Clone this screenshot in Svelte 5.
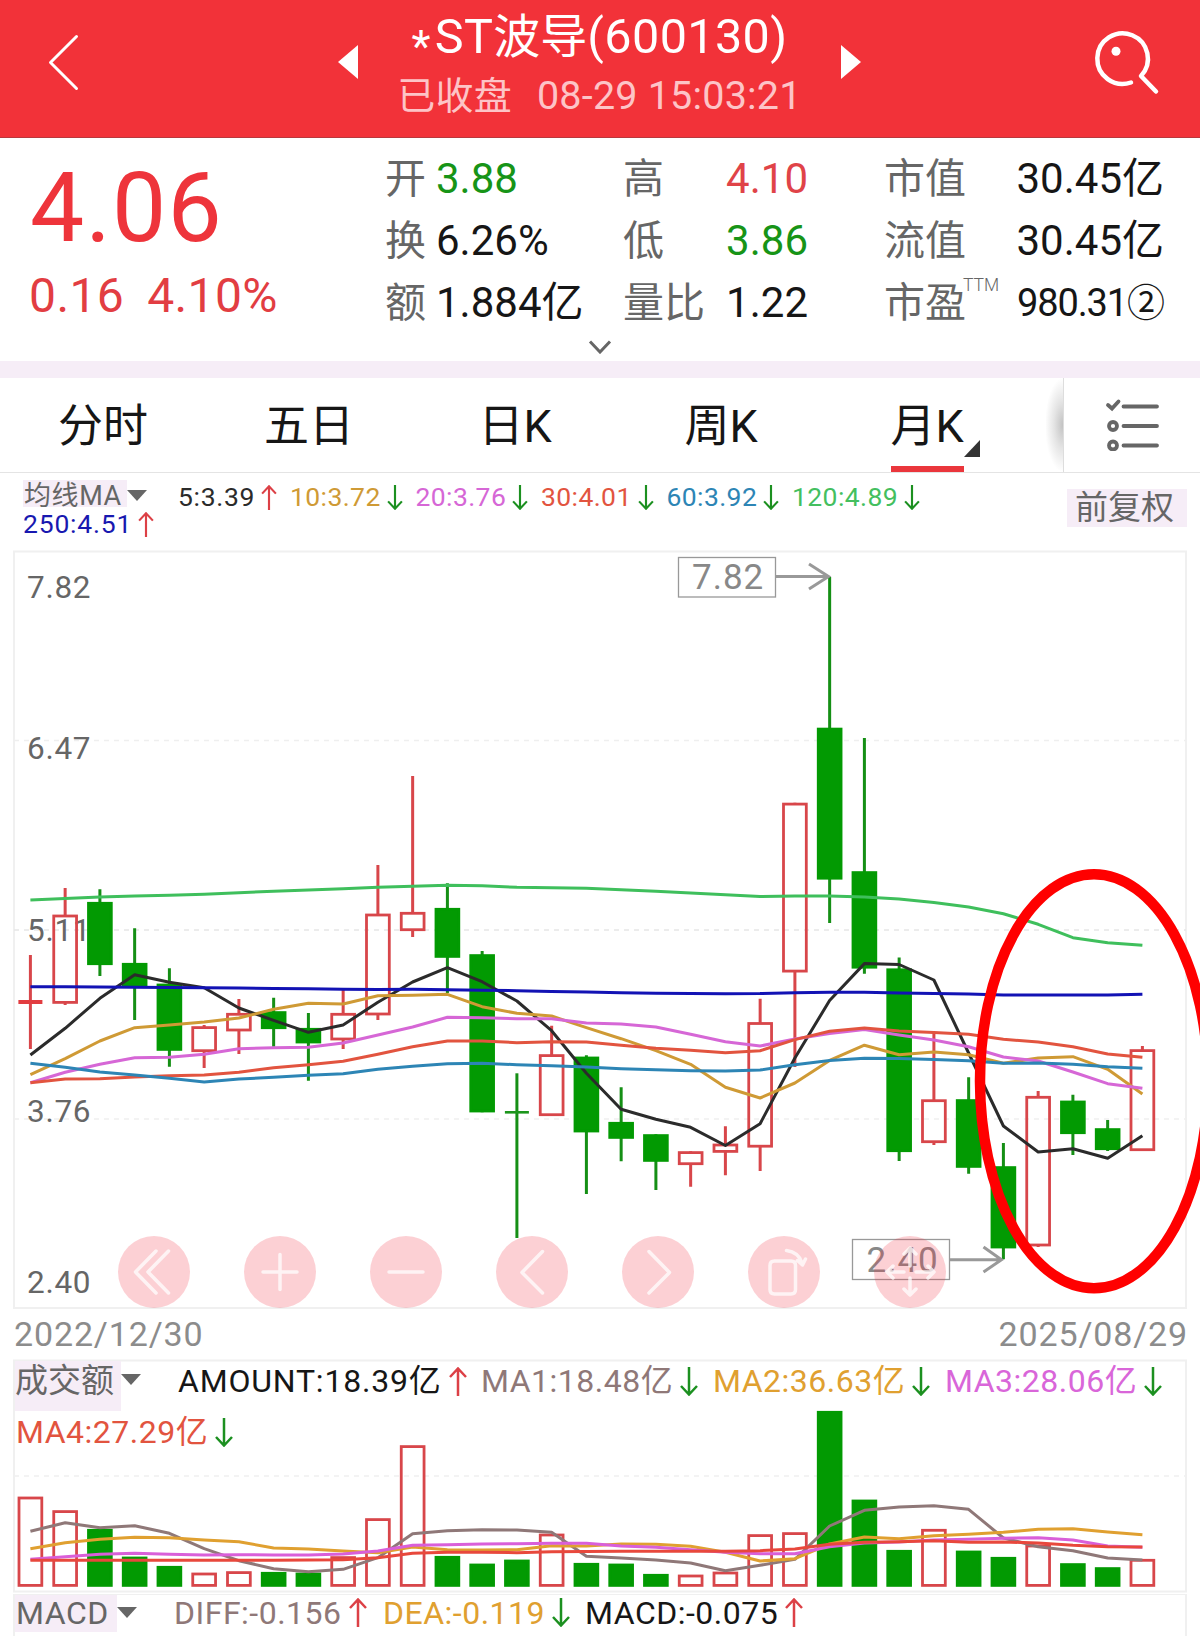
<script>
	const tabs = ['分时', '五日', '日K', '周K', '月K'];
	let activeTab = '月K';

	const quote = [
		{ label: '开', value: '3.88', tone: 'down' },
		{ label: '高', value: '4.10', tone: 'up' },
		{ label: '市值', value: '30.45亿' },
		{ label: '换', value: '6.26%' },
		{ label: '低', value: '3.86', tone: 'down' },
		{ label: '流值', value: '30.45亿' },
		{ label: '额', value: '1.884亿' },
		{ label: '量比', value: '1.22' },
		{ label: '市盈', sup: 'TTM', value: '980.31②', small: true }
	];

	const averages = [
		{ text: '5:3.39', color: '#2b2b2b', up: true },
		{ text: '10:3.72', color: '#cf9a35' },
		{ text: '20:3.76', color: '#d667d6' },
		{ text: '30:4.01', color: '#e2543f' },
		{ text: '60:3.92', color: '#2d85b5' },
		{ text: '120:4.89', color: '#44bf5f' }
	];
	const amounts = [
		{ text: 'AMOUNT:18.39亿', color: '#161616', up: true },
		{ text: 'MA1:18.48亿', color: '#8f7878' },
		{ text: 'MA2:36.63亿', color: '#e0a030' },
		{ text: 'MA3:28.06亿', color: '#d966d9' }
	];
	const macd = [
		{ text: 'DIFF:-0.156', color: '#8f7878', up: true },
		{ text: 'DEA:-0.119', color: '#e0a030' },
		{ text: 'MACD:-0.075', color: '#161616', up: true }
	];

	// [rising, high, body top, body bottom, low]
	const candles = [
		[1, 955, 1000, 1004, 1049],
		[1, 888, 914.7, 1003.7, 1005],
		[0, 889.3, 902, 965, 976],
		[0, 928.3, 963, 986, 1020],
		[0, 968.3, 983.7, 1050.7, 1066.7],
		[1, 1025, 1026.3, 1052, 1068],
		[1, 999, 1013, 1031.3, 1054],
		[0, 997.7, 1011.3, 1029, 1046.7],
		[0, 1013, 1028, 1043.3, 1080.7],
		[1, 990, 1013, 1040.3, 1049],
		[1, 865, 913.7, 1015.3, 1020],
		[1, 776, 912, 931, 937],
		[0, 883.3, 908, 957.7, 993],
		[0, 951, 954.3, 1112.3, 1112.3],
		[0, 1073.3, 1111, 1113.6, 1238],
		[1, 1025.7, 1054.3, 1116, 1116],
		[0, 1055.3, 1056.7, 1132.3, 1194],
		[0, 1087.3, 1122, 1138.7, 1161.3],
		[0, 1134.3, 1134.3, 1161.7, 1190],
		[1, 1151.3, 1151.3, 1165, 1186.7],
		[1, 1126.3, 1143.7, 1152.7, 1175.3],
		[1, 998.8, 1022.2, 1147.5, 1171],
		[1, 802.8, 802.8, 972.4, 1067],
		[0, 577, 727.8, 879.5, 923],
		[0, 738, 871.3, 968.5, 973.7],
		[0, 957.6, 968.5, 1152, 1161],
		[1, 1032, 1099.4, 1143, 1145],
		[0, 1077.3, 1099.3, 1167.7, 1173.7],
		[0, 1143, 1166.3, 1248.3, 1259.3],
		[1, 1091, 1096, 1246.3, 1247],
		[0, 1094.7, 1100.7, 1134, 1155],
		[0, 1120, 1128.3, 1150, 1151],
		[1, 1046, 1049.3, 1151, 1151]
	];
	const priceLines = [
		{ color: '#2b2b2b', y: [1055, 1028.3, 998.3, 974.7, 982.3, 987.7, 1008, 1020.3, 1032.3, 1025, 1002.3, 982, 967.7, 981.7, 1001, 1030.7, 1073.3, 1109.3, 1119.3, 1127.3, 1145.5, 1123.7, 1058, 1000.5, 963.6, 964.5, 980, 1053, 1126, 1152, 1148.7, 1158.3, 1135.7] },
		{ color: '#cf9a35', y: [1074.7, 1058.7, 1041, 1027.7, 1025, 1022, 1018, 1009.3, 1003.3, 1004, 995.7, 995.3, 994.3, 1006.7, 1013.3, 1016, 1027.7, 1038.7, 1050.7, 1064.3, 1087.3, 1098, 1083, 1060.4, 1045.2, 1054.7, 1052, 1054.7, 1063.3, 1058, 1056.7, 1069.3, 1094] },
		{ color: '#d667d6', y: [1082.7, 1072.3, 1064.3, 1057.7, 1057.3, 1054.3, 1048.7, 1047.7, 1047.3, 1043, 1035, 1027, 1017.3, 1017.7, 1018.7, 1018.7, 1023, 1024, 1027, 1034.3, 1041.7, 1046, 1039, 1033.5, 1029.6, 1035, 1040, 1046.7, 1057, 1061, 1072, 1083.7, 1088.3] },
		{ color: '#e2543f', y: [1082.7, 1079, 1078.7, 1077, 1075.7, 1075, 1072.3, 1067.7, 1064.7, 1061.3, 1054.3, 1046.7, 1041, 1041, 1042.7, 1041.7, 1042, 1045.3, 1048.3, 1050.3, 1052.7, 1050.8, 1039.6, 1031.3, 1027.9, 1031, 1032.6, 1034.3, 1039.3, 1042, 1046.7, 1054, 1057.3] },
		{ color: '#2d85b5', y: [1063.3, 1067.3, 1072, 1075, 1078.3, 1082, 1079, 1077.3, 1075.3, 1073.7, 1069.3, 1066.3, 1063.7, 1063.3, 1064.7, 1065.7, 1067, 1068.7, 1069.7, 1070.7, 1071, 1070, 1064.7, 1060.4, 1058.2, 1058.6, 1059.5, 1060.7, 1063.3, 1063, 1064.3, 1066.7, 1068.3] },
		{ color: '#3fbf5c', y: [900, 898.5, 897, 896, 895.3, 894.3, 892.7, 891.3, 890, 888.7, 887.3, 886.3, 885.3, 885.7, 887.3, 887.7, 888.3, 889.7, 891.3, 893, 894.7, 896.5, 896, 896, 897, 899, 902.5, 907, 913.7, 924.3, 937.7, 942.7, 945.3] },
		{ color: '#1212b4', y: [986.7, 986.7, 987, 987.2, 987.4, 987.7, 988, 988.4, 988.8, 989.2, 989.5, 989.3, 989.7, 990.2, 990.7, 991.4, 992, 992.7, 993.3, 993.5, 993.7, 993.6, 992.7, 992.3, 992.3, 993, 993.6, 994, 995, 995, 995, 995, 994.3] }
	];

	// [rising, bar top]
	const volumes = [
		[1, 1496.7], [1, 1510.3], [0, 1529], [0, 1556.7], [0, 1566], [1, 1572.7], [1, 1571.3], [0, 1572],
		[0, 1572.7], [1, 1556.3], [1, 1518.3], [1, 1445.3], [0, 1556], [0, 1563.7], [0, 1559.7], [1, 1533.7],
		[0, 1563], [0, 1563.7], [0, 1574], [1, 1574.7], [1, 1571.7], [1, 1534.3], [1, 1532.3], [0, 1411],
		[0, 1499.7], [0, 1550], [1, 1529], [0, 1550.7], [0, 1557], [1, 1544.7], [0, 1563.3], [0, 1567.3], [1, 1559]
	];
	const volumeLines = [
		{ color: '#8f7878', y: [1531.3, 1522.7, 1527.7, 1525.7, 1533.3, 1548.7, 1560.7, 1568.7, 1571.7, 1569.3, 1557.7, 1533.7, 1530.7, 1529.7, 1530, 1532.3, 1556.3, 1558, 1560, 1563, 1570.7, 1565.3, 1559.3, 1526, 1510.3, 1507, 1505.7, 1509.3, 1538, 1546.7, 1550.7, 1558, 1560] },
		{ color: '#e0a030', y: [1548.7, 1542.7, 1539.3, 1537.3, 1537.7, 1540, 1541.7, 1548, 1549, 1551, 1552.7, 1547, 1549.7, 1550, 1549.7, 1545.7, 1546, 1544, 1544.3, 1546.3, 1552.3, 1561, 1558.7, 1544, 1537, 1538.7, 1535.7, 1534.3, 1532.3, 1529.3, 1528.7, 1532, 1534.7] },
		{ color: '#d95fd9', y: [1559.3, 1556.7, 1554.3, 1553.3, 1554.3, 1555, 1554.7, 1555, 1555, 1554, 1551, 1545.3, 1544.7, 1544, 1543.7, 1543.3, 1543.3, 1546, 1547.3, 1549.7, 1552.3, 1553.7, 1553.7, 1546.7, 1543, 1542, 1540, 1539.3, 1538.3, 1537.7, 1540, 1546, 1547.3] },
		{ color: '#e8483c', y: [1560.3, 1560.3, 1560.3, 1560.3, 1560.3, 1560.3, 1560.3, 1560.3, 1560, 1559.7, 1557.7, 1553.3, 1552.3, 1552.3, 1552.7, 1551.7, 1551.5, 1551.3, 1551.3, 1551.3, 1551.3, 1550.7, 1549, 1544.3, 1542.3, 1541.7, 1540.7, 1542.3, 1542, 1543, 1545.3, 1546.7, 1547] }
	];

	const volumeBase = 1586.7;
	const axis = [
		['7.82', 598],
		['6.47', 758.5],
		['5.11', 940.7],
		['3.76', 1121.5],
		['2.40', 1292.5]
	];

	const x = (i) => 30.4 + i * 34.75;
	const points = (ys) => ys.map((y, i) => `${x(i).toFixed(1)},${y}`).join(' ');

	const tools = [
		{ name: 'first', d: 'M2-21-18.5 0 2 21M14.5-21-6 0 14.5 21' },
		{ name: 'zoom in', d: 'M-17 0H17M0-17.5V17.5' },
		{ name: 'zoom out', d: 'M-17 0H17' },
		{ name: 'previous', d: 'M10.5-20.5-10 .5 10.5 21' },
		{ name: 'next', d: 'M-9-20.5 11.5.5-9 21' },
		{ name: 'rotate', d: 'M-9.5-11H7Q11.5-11 11.5-6.5V17.5Q11.5 22 7 22H-9.5Q-14 22-14 17.5V-6.5Q-14-11-9.5-11ZM2.5-21.5Q14.5-20 18-9M13.5-11.5 18.5-7 21.5-13' },
		{ name: 'move', d: 'M0-6V-24M-6-18 0-24 6-18M0 6V23M-6 17 0 23 6 17M-6 0H-23M-17-6-23 0-17 6M6 0H24M18-6 24 0 18 6' }
	];
</script>

{#snippet arrow(up)}
	<svg class="arrow" class:up viewBox="0 0 18 29">
		<path d={up ? 'M9 29V2M1 10 9 1.5 17 10' : 'M9 0V27M1 19 9 27.5 17 19'} />
	</svg>
{/snippet}

{#snippet readings(list)}
	{#each list as item}
		<span class="reading" style:color={item.color}>{item.text}{@render arrow(item.up)}</span>
	{/each}
{/snippet}

<div class="page">
	<header>
		<svg class="back" width="338" height="137" viewBox="0 0 338 137">
			<path d="M76.5 36.5 50.5 62.5 76.500 88.500" />
		</svg>
		<svg width="20" height="34" viewBox="0 0 20 34"><path class="solid" d="M20 0V34L0 17Z" /></svg>
		<div class="heading">
			<h1><span class="star">*</span>ST<span class="name">波导</span>(600130)</h1>
			<p><span class="state">已收盘</span>08-29 15:03:21</p>
		</div>
		<svg width="20" height="34" viewBox="0 0 20 34"><path class="solid" d="M0 0V34L20 17Z" /></svg>
		<svg class="search" width="339" height="137" viewBox="861 0 339 137">
			<path d="M1131 82.500A25.300 25.300 0 1 1 1141 76L1156 91.500" />
			<circle class="solid" cx="1116" cy="51.300" r="4.500" />
		</svg>
	</header>

	<section class="quote">
		<div class="price">
			<strong>4.06</strong>
			<div class="change"><span>0.16</span><span>4.10%</span></div>
		</div>
		<dl>
			{#each quote as q}
				<div class="stat">
					<dt>{q.label}{#if q.sup}<sup>{q.sup}</sup>{/if}</dt>
					<dd class={q.tone} class:small={q.small}>{q.value}</dd>
				</div>
			{/each}
		</dl>
		<svg class="more" width="24" height="14" viewBox="0 0 24 14"><path d="M2 1.500 12 12 22 1.500" /></svg>
	</section>

	<nav>
		<div class="tabs">
			{#each tabs as tab}
				<button class="tab" class:active={tab === activeTab} on:click={() => (activeTab = tab)}>
					{tab}
				</button>
			{/each}
		</div>
		<div class="edge"></div>
		<button class="settings" aria-label="settings">
			<svg width="56" height="54" viewBox="0 0 56 54">
				<path d="M4 8 8 11.500 14.500 4.500M19.500 9.500H53M19.500 29H53M19.500 48.500H53" />
				<circle cx="9" cy="29" r="4" />
				<circle cx="9" cy="48.500" r="4" />
			</svg>
		</button>
	</nav>

	<section class="ma">
		<div class="lines">
			<div class="row">
				<span class="picker"><b>均线MA</b><i></i></span>
				{@render readings(averages)}
			</div>
			<div class="row second">
				{@render readings([{ text: '250:4.51', color: '#1818b0', up: true }])}
			</div>
		</div>
		<span class="adjust">前复权</span>
	</section>

	<section class="chart">
		<svg width="1200" height="775" viewBox="0 540 1200 775">
			<rect class="frame" x="14" y="551.500" width="1172" height="756.500" />
			<path class="grid" d="M14 740.500H1186M14 1119H1186" />
			<path class="grid mid" d="M14 930H1186" />
			{#each axis as [label, y]}
				<text class="axis" x="27" {y}>{label}</text>
			{/each}

			{#each candles as [rising, high, top, bottom, low], i}
				<g class={rising ? 'rise' : 'fall'}>
					{#if bottom - top < 5}
						<path class="wick" d="M{x(i)} {high}V{low}" />
						<rect class="body flat" x={x(i) - 12} y={top} width="24" height={bottom - top} />
					{:else}
						<path class="wick" d="M{x(i)} {high}V{top + 1}M{x(i)} {bottom - 1}V{low}" />
						<rect class="body" x={x(i) - 11.4} y={top + 1.3} width="22.800" height={bottom - top - 2.6} />
					{/if}
				</g>
			{/each}

			{#each priceLines as line}
				<polyline class="avg" points={points(line.y)} stroke={line.color} />
			{/each}

			<g class="mark">
				<rect x="678.500" y="557.500" width="97" height="39.500" />
				<text x="692" y="589">7.82</text>
				<path d="M776 576.500H828M809 564 828.500 576.500 809 589" />
				<rect x="852.500" y="1239.500" width="97" height="40" />
				<text x="866.500" y="1271.700">2.40</text>
				<path d="M950 1259.700H1001M983.500 1247 1001.500 1259.700 983.500 1272" />
			</g>
			<ellipse class="circled" cx="1094" cy="1081.300" rx="114" ry="207" />
		</svg>
		<div class="toolbar">
			{#each tools as tool}
				<button aria-label={tool.name}>
					<svg width="72" height="72" viewBox="-36 -36 72 72"><path d={tool.d} /></svg>
				</button>
			{/each}
		</div>
	</section>

	<div class="dates"><span>2022/12/30</span><span>2025/08/29</span></div>

	<section class="volume">
		<svg width="1200" height="235" viewBox="0 1359 1200 235">
			<rect class="frame" x="14" y="1360.500" width="1172" height="231" />
			<path class="grid" d="M14 1476H1186" />
			{#each volumes as [rising, top], i}
				<g class={rising ? 'rise' : 'fall'}>
					<rect class="body" x={x(i) - 11.4} y={top + 1.3} width="22.800" height={volumeBase - top - 2.6} />
				</g>
			{/each}
			{#each volumeLines as line}
				<polyline class="avg" points={points(line.y)} stroke={line.color} />
			{/each}
		</svg>
		<div class="legend">
			<div class="row">
				<span class="picker"><b>成交额</b><i></i></span>
				{@render readings(amounts)}
			</div>
			<div class="row second">
				{@render readings([{ text: 'MA4:27.29亿', color: '#e2543f' }])}
			</div>
		</div>
	</section>

	<section class="macd">
		<div class="row">
			<span class="picker"><b>MACD</b><i></i></span>
			{@render readings(macd)}
		</div>
	</section>
</div>

<style>
	:global(body) {
		background: #fff;
	}
	.page {
		width: 1200px;
		height: 1636px;
		overflow: hidden;
		background: #fff;
		color: #161616;
		font-family: Roboto, 'Noto Sans CJK SC', sans-serif;
	}
	svg {
		display: block;
		flex: none;
		fill: none;
	}
	button {
		padding: 0;
		border: 0;
		background: none;
		color: inherit;
		font: inherit;
	}

	header {
		display: grid;
		grid-template-columns: 338px 20px 483px 20px 339px;
		height: 137px;
		border-bottom: 1px solid #b8383d;
		background: #f23239;
		color: #fff;
	}
	header > svg {
		margin-top: 45px;
		stroke: #fff;
		stroke-linejoin: round;
		stroke-linecap: round;
	}
	header .back,
	header .search {
		margin-top: 0;
		stroke-width: 3;
	}
	header .search {
		stroke-width: 4.5;
	}
	.solid {
		fill: #fff;
		stroke: none;
	}
	.heading {
		padding-top: 8px;
		text-align: center;
		white-space: nowrap;
	}
	h1,
	p,
	dl,
	dd {
		margin: 0;
	}
	h1 {
		font-size: 48.500px;
		font-weight: 400;
		line-height: 57px;
		letter-spacing: 0.4px;
	}
	.star {
		position: relative;
		top: 9px;
		margin-right: 4px;
		font-size: 44px;
	}
	.name {
		font-size: 47px;
		letter-spacing: 0;
	}
	p {
		color: #fdc4c7;
		font-size: 39.500px;
		line-height: 57px;
		letter-spacing: 0.2px;
	}
	.state {
		margin-right: 25px;
		font-size: 38px;
	}

	.quote {
		display: grid;
		grid-template-columns: 386px 1fr;
		height: 223px;
	}
	.price {
		padding: 20px 0 0 29px;
		color: #ee343b;
	}
	.price strong {
		display: block;
		padding-left: 1px;
		font-size: 96.500px;
		font-weight: 400;
		line-height: 101px;
		letter-spacing: 1.2px;
	}
	.change {
		display: flex;
		gap: 23px;
		margin-top: 6px;
		color: #e23d42;
		font-size: 48px;
		line-height: 61px;
		letter-spacing: 0.4px;
	}
	dl {
		display: grid;
		grid-template-columns: 238px 184px 279px;
		grid-auto-rows: 62px;
		padding-top: 10px;
	}
	.stat {
		display: flex;
		justify-content: space-between;
		font-size: 42px;
		line-height: 62px;
		white-space: nowrap;
	}
	.stat:nth-child(3n + 1) {
		justify-content: flex-start;
		gap: 10px;
	}
	.stat:nth-child(3n) {
		margin-left: 77px;
		margin-right: -77px;
	}
	dt {
		margin-left: -1px;
		color: #666;
		font-size: 41px;
	}
	sup {
		position: relative;
		top: -26px;
		left: -3px;
		font-size: 17.500px;
		font-weight: 300;
		line-height: 0;
		vertical-align: baseline;
	}
	.up {
		color: #e04348;
	}
	.down {
		color: #179417;
	}
	.small {
		font-size: 38px;
		letter-spacing: -1.1px;
	}
	.more {
		grid-column: 1 / 3;
		justify-self: center;
		margin-top: -2px;
		stroke: #666;
		stroke-width: 3;
	}

	nav {
		display: flex;
		height: 94px;
		border-top: 17px solid #f6edf7;
		border-bottom: 1px solid #e4e4e4;
	}
	.tabs {
		display: flex;
		width: 1046px;
	}
	.tab {
		position: relative;
		width: 206px;
		padding-top: 4px;
		font-size: 45px;
		line-height: 90px;
	}
	.tab.active::before {
		content: '';
		position: absolute;
		left: 67px;
		bottom: 0;
		width: 73px;
		height: 6px;
		background: #ea363c;
	}
	.tab.active::after {
		content: '';
		position: absolute;
		left: 140px;
		bottom: 15px;
		border-style: solid;
		border-width: 0 0 17px 16px;
		border-color: transparent transparent #333;
	}
	.edge {
		width: 17px;
		border-right: 1px solid #ddd;
		background: radial-gradient(ellipse 18px 47px at 100% 50%, #c2c2c2, #e4e4e4 50%, #fff);
	}
	.settings {
		padding: 0 0 3px 40px;
	}
	.settings svg {
		stroke: #666;
		stroke-width: 3.8;
		stroke-linecap: round;
	}

	.row {
		display: flex;
		white-space: nowrap;
	}
	.picker {
		display: flex;
		flex: none;
		color: #666;
	}
	.picker b {
		background: #f6edf7;
		font-weight: 400;
	}
	.picker i {
		border-style: solid;
		border-width: 11px 10.500px 0;
		border-color: #666 transparent transparent;
		align-self: flex-start;
	}
	.reading {
		display: flex;
		flex: none;
	}
	.arrow {
		stroke: #1c9020;
		stroke-width: 2.5;
	}
	.arrow.up {
		stroke: #dc4046;
	}

	.ma {
		display: flex;
		justify-content: space-between;
		height: 60px;
		padding: 7px 13px 0 23px;
		font-size: 26.500px;
		letter-spacing: 0.4px;
	}
	.ma .row {
		line-height: 33px;
	}
	.ma .row.second {
		margin-top: -6px;
		letter-spacing: 0.8px;
	}
	.ma .picker {
		width: 155px;
	}
	.ma .picker b {
		width: 104px;
		height: 27px;
		font-size: 27px;
		letter-spacing: 0.6px;
		text-indent: 1px;
	}
	.ma .picker i {
		margin-top: 10px;
	}
	.ma .reading {
		width: 125.500px;
	}
	.ma .reading:nth-child(2) {
		width: 112px;
		letter-spacing: 0.7px;
	}
	.ma .arrow {
		width: 16px;
		height: 25px;
		margin: 4.500px 0 0 6px;
	}
	.adjust {
		width: 120px;
		height: 38px;
		margin-top: 9px;
		background: #f6edf7;
		color: #666;
		font-size: 33px;
		line-height: 38px;
		letter-spacing: 0;
		text-indent: 8px;
	}

	.chart,
	.volume {
		display: grid;
	}
	.chart > *,
	.volume > * {
		grid-area: 1 / 1;
	}
	.frame {
		stroke: #f0f0f0;
		stroke-width: 2;
	}
	.grid {
		stroke: #efefef;
		stroke-width: 1.5;
		stroke-dasharray: 5 5;
	}
	.grid.mid {
		stroke: #e6e6e6;
	}
	.axis {
		fill: #666;
		font-size: 31.500px;
		letter-spacing: 0.7px;
	}
	.rise {
		stroke: #d8464a;
	}
	.fall {
		fill: #029a02;
		stroke: #158f15;
	}
	.wick {
		stroke-width: 3;
	}
	.body {
		stroke-width: 2.8;
	}
	.fall .body {
		stroke: #029a02;
	}
	.body.flat {
		fill: #e23c40;
		stroke: none;
	}
	.fall .body.flat {
		fill: #1c951c;
	}
	.avg {
		stroke-width: 3;
		stroke-linejoin: round;
	}
	.mark {
		stroke: #999;
		stroke-width: 3;
	}
	.mark rect {
		stroke-width: 1.3;
	}
	.mark text {
		fill: #888;
		stroke: none;
		font-size: 35px;
		letter-spacing: 1px;
	}
	.circled {
		stroke: #f00;
		stroke-width: 10.5;
	}
	.toolbar {
		display: flex;
		align-self: end;
		gap: 54px;
		padding: 0 0 7px 117.700px;
	}
	.toolbar button {
		width: 72px;
		height: 72px;
		border-radius: 50%;
		background: rgba(242, 50, 70, 0.23);
	}
	.toolbar path {
		stroke: rgba(255, 255, 255, 0.75);
		stroke-width: 3.5;
		stroke-linecap: round;
		stroke-linejoin: round;
	}

	.dates {
		display: flex;
		justify-content: space-between;
		height: 44px;
		padding: 0 12px 0 14px;
		color: #8c8c8c;
		font-size: 34px;
		line-height: 39px;
		letter-spacing: 0.85px;
	}

	.volume .row,
	.macd .row {
		font-size: 32px;
		letter-spacing: 0.5px;
	}
	.volume .legend {
		padding: 2px 0 0 15px;
	}
	.volume .row {
		line-height: 40px;
	}
	.volume .row.second {
		padding-left: 1px;
		margin-top: 1px;
	}
	.volume .picker {
		width: 163px;
	}
	.volume .picker b {
		width: 106px;
		height: 50px;
		font-size: 33px;
		letter-spacing: 0;
	}
	.volume .picker i {
		margin-top: 13px;
	}
	.volume .arrow,
	.macd .arrow {
		width: 18px;
		height: 29px;
		margin: 6px 0 0 7px;
	}
	.volume .reading {
		width: 232px;
	}
	.volume .reading:nth-child(2) {
		width: 303px;
		letter-spacing: 0.8px;
	}
	.macd .row {
		height: 42px;
		margin: 0 13px;
		border: solid #f0f0f0;
		border-width: 1px 2px 0;
		line-height: 37px;
	}
	.macd .picker {
		width: 159px;
	}
	.macd .picker b {
		width: 102px;
		height: 37px;
		text-indent: 1px;
	}
	.macd .picker i {
		margin-top: 12px;
	}
	.macd .arrow {
		margin-top: 3px;
	}
	.macd .reading {
		width: 209px;
	}
	.macd .reading:nth-child(3) {
		width: 202px;
	}
</style>
